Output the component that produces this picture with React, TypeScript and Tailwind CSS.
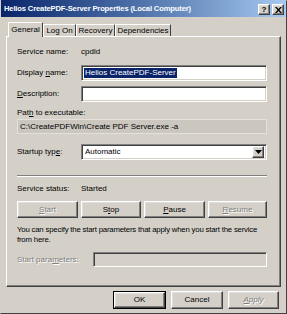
import React from "react";

const style = {
    raised: "border border-t-white border-l-white border-r-[#404040] border-b-[#404040] shadow-[inset_-1px_-1px_#808080,inset_1px_1px_#dfdfdf]",
    sunken: "border border-t-[#808080] border-l-[#808080] border-r-white border-b-white shadow-[inset_1px_1px_#404040,inset_-1px_-1px_#d4d0c8]",
    label: "w-[64px] shrink-0",
    disabled: "text-[#808080] [text-shadow:1px_1px_#fff]",
};

const U: React.FC<{ children: React.ReactNode }> = ({ children }) => <span className="underline underline-offset-1">{children}</span>;

const Button: React.FC<{ children: React.ReactNode; disabled?: boolean; className?: string }> = ({ children, disabled, className }) => (
    <div className={`${style.raised} flex items-center justify-center ${disabled ? style.disabled : "text-black"} ${className ?? ""}`}>
        {children}
    </div>
);

const tabs = [
    { text: "General", w: "w-[35px]" },
    { text: "Log On", w: "w-[33px]" },
    { text: "Recovery", w: "w-[39px]" },
    { text: "Dependencies", w: "w-[56px]" },
];

export default function App() {
    return (
        <div
            className="flex h-[314px] w-[287px] flex-col border border-t-[#d4d0c8] border-l-[#d4d0c8] border-r-[#404040] border-b-[#404040] bg-[#d4d0c8] text-[8px] leading-none text-black"
            style={{ fontFamily: '"Liberation Sans", Arial, sans-serif' }}
        >
            <div className="-mt-[1px] flex h-[17px] items-center bg-gradient-to-r from-[#0a246a] to-[#a6caf0] pl-[3px] pr-[2px]">
                <span className="grow pt-[1px] text-[7.6px] font-bold tracking-[-0.15px] text-white">
                    Helios CreatePDF-Server Properties (Local Computer)
                </span>
                <div className={`${style.raised} mt-[2px] flex h-[11px] w-[12px] items-center justify-center bg-[#d4d0c8] text-[8px] font-bold`}>?</div>
                <div className={`${style.raised} ml-[2px] mt-[2px] flex h-[11px] w-[12px] items-center justify-center bg-[#d4d0c8]`}>
                    <svg width="7" height="6" viewBox="0 0 7 6">
                        <path d="M0 0h1.8L3.5 2 5.2 0H7L4.4 3 7 6H5.2L3.5 4 1.8 6H0l2.6-3z" fill="#000" />
                    </svg>
                </div>
            </div>

            <div className="flex grow flex-col px-[5px] pt-[5px]">
                <div className="flex h-[14px] items-end pl-[2px]">
                    {tabs.map((t, i) => (
                        <div
                            key={t.text}
                            className={
                                i === 0
                                    ? `relative z-10 -mb-[1px] flex h-[15px] items-center justify-center border-l border-t border-r border-l-white border-t-white border-r-[#404040] bg-[#d4d0c8] ${t.w}`
                                    : `flex h-[12px] items-center justify-center border-l border-t border-r border-l-white border-t-white border-r-[#404040] ${t.w}`
                            }
                        >
                            {t.text}
                        </div>
                    ))}
                </div>

                <div className="flex h-[251px] flex-col border border-t-white border-l-white border-r-[#404040] border-b-[#404040] pl-[10px] pr-[13px] pt-[11px] shadow-[inset_-1px_-1px_#808080]">
                    <div className="flex h-[8px] items-center">
                        <span className={style.label}>Service name:</span>
                        <span>cpdld</span>
                    </div>

                    <div className="mt-[9px] flex items-center">
                        <span className={style.label}>
                            Display <U>n</U>ame:
                        </span>
                        <div className={`${style.sunken} flex h-[16px] grow items-center bg-white px-[2px]`}>
                            <span className="bg-[#0a246a] px-[1px] py-[1px] text-white">Helios CreatePDF-Server</span>
                        </div>
                    </div>

                    <div className="mt-[5px] flex items-center">
                        <span className={style.label}>
                            <U>D</U>escription:
                        </span>
                        <div className={`${style.sunken} h-[16px] grow bg-white`} />
                    </div>

                    <div className="mt-[7px] h-[8px]">
                        Pat<U>h</U> to executable:
                    </div>
                    <div className="mt-[2px] flex h-[15px] items-center border border-[#e4e1dc] bg-[#cbc7bf] px-[2px]">
                        C:\CreatePDFWin\Create PDF Server.exe -a
                    </div>

                    <div className="mt-[10px] flex items-center">
                        <span className={style.label}>
                            Startup typ<U>e</U>:
                        </span>
                        <div className={`${style.sunken} flex h-[16px] grow items-center bg-white pl-[3px] pr-[2px]`}>
                            <span className="grow">Automatic</span>
                            <div className={`${style.raised} flex h-[12px] w-[12px] items-center justify-center bg-[#d4d0c8]`}>
                                <svg width="7" height="4" viewBox="0 0 7 4">
                                    <path d="M0 0h7L3.5 4z" fill="#000" />
                                </svg>
                            </div>
                        </div>
                    </div>

                    <div className="mt-[15px] h-[2px] border-t border-b border-t-[#808080] border-b-white" />

                    <div className="mt-[8px] flex h-[8px] items-center">
                        <span className={style.label}>Service status:</span>
                        <span>Started</span>
                    </div>

                    <div className="mt-[8px] flex h-[17px] gap-[3px]">
                        <Button disabled className="w-[61px]">
                            <U>S</U>tart
                        </Button>
                        <Button className="w-[60px]">
                            S<U>t</U>op
                        </Button>
                        <Button className="w-[61px]">
                            <U>P</U>ause
                        </Button>
                        <Button disabled className="grow">
                            <U>R</U>esume
                        </Button>
                    </div>

                    <p className="-mr-[4px] mt-[7px] text-[7.8px] leading-[10px] tracking-[-0.2px]">
                        You can specify the start parameters that apply when you start the service from here.
                    </p>

                    <div className="mt-[7px] flex items-center">
                        <span className={`w-[76px] shrink-0 ${style.disabled}`}>
                            Start para<U>m</U>eters:
                        </span>
                        <div className={`${style.sunken} h-[15px] grow bg-[#d4d0c8]`} />
                    </div>
                </div>

                <div className="mt-[4px] flex justify-end gap-[5px] pr-[2px]">
                    <div className="border border-black">
                        <Button className="h-[16px] w-[51px]">OK</Button>
                    </div>
                    <Button className="h-[18px] w-[52px]">Cancel</Button>
                    <Button disabled className="h-[18px] w-[51px] italic">
                        <U>A</U>pply
                    </Button>
                </div>
            </div>
        </div>
    );
}
